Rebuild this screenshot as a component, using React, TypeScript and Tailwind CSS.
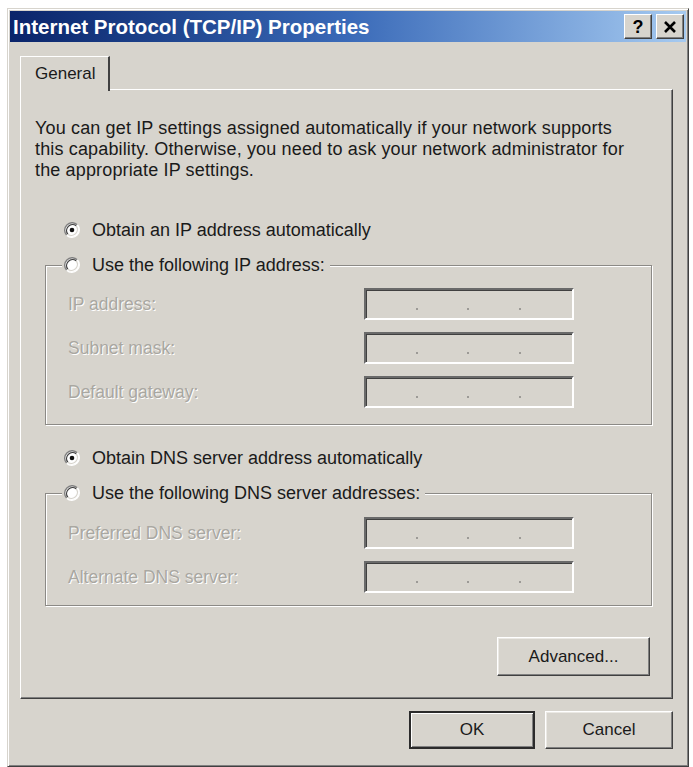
import React from "react";

const font = { fontFamily: '"Liberation Sans", Arial, sans-serif' };

function Radio({ checked }: { checked?: boolean }) {
  return (
    <svg width="16" height="16" viewBox="0 0 16 16" className="shrink-0">
      <circle cx="8" cy="8" r="7" fill="#ffffff" />
      <path d="M2.7 13.3 A7.5 7.5 0 0 1 13.3 2.7" fill="none" stroke="#808080" strokeWidth="1.4" />
      <path d="M3.8 12.2 A6 6 0 0 1 12.2 3.8" fill="none" stroke="#404040" strokeWidth="1.3" />
      <path d="M13.3 2.7 A7.5 7.5 0 0 1 2.7 13.3" fill="none" stroke="#ffffff" strokeWidth="1.3" />
      <path d="M12.2 3.8 A6 6 0 0 1 3.8 12.2" fill="none" stroke="#d7d4cd" strokeWidth="1.3" />
      {checked && <circle cx="8" cy="8" r="2.3" fill="#111111" />}
    </svg>
  );
}

function IpField() {
  return (
    <div className="flex h-[32px] w-[210px] border-2 border-t-[#6a6a6a] border-l-[#6a6a6a] border-r-white border-b-white shadow-[inset_1px_1px_0_#404040]">
      {[0, 1, 2, 3].map((i) => (
        <div key={i} className="flex flex-1 items-end justify-end">
          {i < 3 && <span className="mb-[8px] h-[2px] w-[2px] bg-[#9c9a96]" />}
        </div>
      ))}
    </div>
  );
}

function Label({ children }: { children: React.ReactNode }) {
  return (
    <span className="w-[296px] text-[17.5px] text-[#a9a7a1] [text-shadow:1px_1px_0_#ffffff]">
      {children}
    </span>
  );
}

function Button({
  children,
  className,
  primary,
}: {
  children: React.ReactNode;
  className?: string;
  primary?: boolean;
}) {
  return (
    <button
      className={
        primary
          ? "flex h-[38px] items-center justify-center border-2 border-[#2b2b2b] bg-[#d7d4cd] text-[17px] text-[#1a1a1a] shadow-[inset_1px_1px_0_#ffffff,inset_-1px_-1px_0_#808080] " +
            (className ?? "")
          : "flex h-[38px] items-center justify-center border border-t-white border-l-white border-r-[#404040] border-b-[#404040] bg-[#d7d4cd] text-[17px] text-[#1a1a1a] shadow-[inset_-1px_-1px_0_#808080,inset_1px_1px_0_#ebe9e4] " +
            (className ?? "")
      }
    >
      {children}
    </button>
  );
}

function TitleButton({ children }: { children: React.ReactNode }) {
  return (
    <div className="flex h-[25px] w-[28px] items-center justify-center border border-t-white border-l-white border-r-[#404040] border-b-[#404040] bg-[#d7d4cd] shadow-[inset_-1px_-1px_0_#808080]">
      {children}
    </div>
  );
}

export default function App() {
  return (
    <div className="h-[767px] w-[693px] overflow-hidden bg-white pl-[7px] pt-[8px]" style={font}>
      <div className="flex h-[759px] w-[682px] flex-col border border-t-[#d7d4cd] border-l-[#d7d4cd] border-r-[#404040] border-b-[#404040] bg-[#d7d4cd] p-[2px] shadow-[inset_1px_1px_0_#ffffff,inset_-1px_-1px_0_#808080]">
        {/* Title bar */}
        <div className="flex h-[31px] items-center justify-between bg-linear-to-r from-[#0a246a] via-[#3a6ab8] to-[#a6caf0] pl-[3px] pr-[2px]">
          <span className="mt-[2px] text-[20.5px] font-bold text-white">Internet Protocol (TCP/IP) Properties</span>
          <div className="flex gap-[4px]">
            <TitleButton>
              <span className="text-[18px] font-bold leading-none text-black">?</span>
            </TitleButton>
            <TitleButton>
              <svg width="14" height="12" viewBox="0 0 14 12">
                <path d="M2 1 L12 11 M12 1 L2 11" stroke="#000" strokeWidth="2.6" />
              </svg>
            </TitleButton>
          </div>
        </div>

        <div className="ml-[10px] flex w-[653px] flex-col">
          {/* Tab */}
          <div className="relative z-10 mt-[14px] -mb-[2px] flex h-[35px] w-[90px] items-center border-l border-t border-l-white border-t-white border-r-2 border-r-[#404040] bg-[#d7d4cd] pl-[14px]">
            <span className="text-[17px] text-[#1a1a1a]">General</span>
          </div>

          {/* Tab panel */}
          <div className="flex h-[610px] flex-col border border-t-white border-l-white border-r-[#404040] border-b-[#404040] pl-[24px] pr-[20px] pt-[28px] text-[#1a1a1a] shadow-[inset_-1px_-1px_0_#808080]">
            <p className="-ml-[10px] text-[18px] leading-[21px] tracking-[0.15px]">
              You can get IP settings assigned automatically if your network supports
              <br />
              this capability. Otherwise, you need to ask your network administrator for
              <br />
              the appropriate IP settings.
            </p>

            <label className="ml-[19px] mt-[38px] flex h-[22px] items-center gap-[12px] text-[18px]">
              <Radio checked />
              Obtain an IP address automatically
            </label>

            <fieldset className="mt-[13px] border border-[#8c8a86] pb-[16px] pl-[22px] pt-[12px] shadow-[inset_1px_1px_0_#ffffff,1px_1px_0_#ffffff]">
              <legend className="-ml-[6px] flex h-[22px] items-center gap-[12px] bg-[#d7d4cd] pl-[2px] pr-[5px] text-[18px]">
                <Radio />
                Use the following IP address:
              </legend>
              <div className="flex flex-col gap-[12px]">
                <div className="flex items-center">
                  <Label>IP address:</Label>
                  <IpField />
                </div>
                <div className="flex items-center">
                  <Label>Subnet mask:</Label>
                  <IpField />
                </div>
                <div className="flex items-center">
                  <Label>Default gateway:</Label>
                  <IpField />
                </div>
              </div>
            </fieldset>

            <label className="ml-[19px] mt-[22px] flex h-[22px] items-center gap-[12px] text-[18px]">
              <Radio checked />
              Obtain DNS server address automatically
            </label>

            <fieldset className="mt-[13px] border border-[#8c8a86] pb-[12px] pl-[22px] pt-[13px] shadow-[inset_1px_1px_0_#ffffff,1px_1px_0_#ffffff]">
              <legend className="-ml-[6px] flex h-[22px] items-center gap-[12px] bg-[#d7d4cd] pl-[2px] pr-[5px] text-[18px]">
                <Radio />
                Use the following DNS server addresses:
              </legend>
              <div className="flex flex-col gap-[12px]">
                <div className="flex items-center">
                  <Label>Preferred DNS server:</Label>
                  <IpField />
                </div>
                <div className="flex items-center">
                  <Label>Alternate DNS server:</Label>
                  <IpField />
                </div>
              </div>
            </fieldset>

            <Button className="mr-[2px] mt-[31px] h-[39px] w-[153px] self-end">Advanced...</Button>
          </div>

          {/* Dialog buttons */}
          <div className="mt-[12px] flex justify-end gap-[10px]">
            <Button primary className="w-[126px]">
              OK
            </Button>
            <Button className="w-[128px]">Cancel</Button>
          </div>
        </div>
      </div>
    </div>
  );
}
